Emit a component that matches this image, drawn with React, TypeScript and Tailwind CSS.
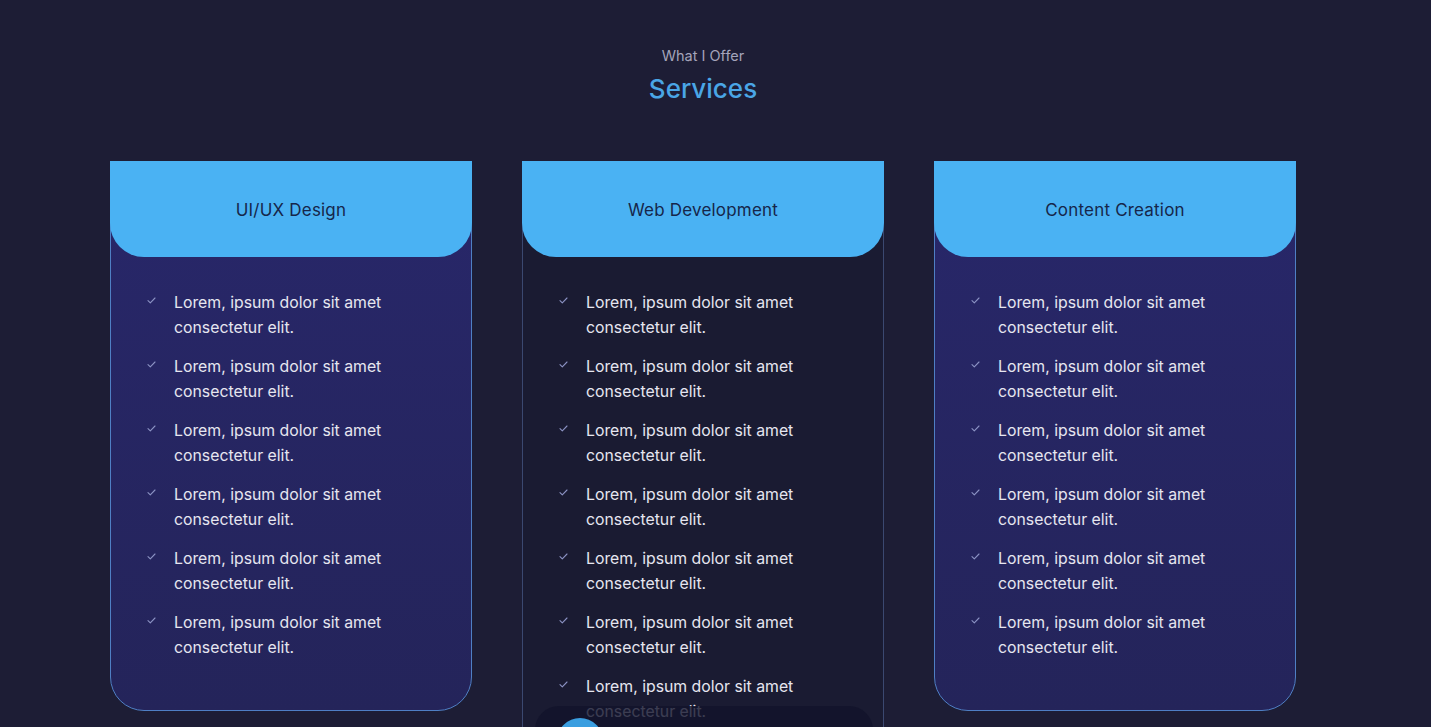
import React from "react";

const items = (n: number) => Array.from({ length: n }, (_, i) => i);

function Check() {
  return (
    <svg width="9" height="7" viewBox="0 0 9 7" className="mt-[7px] shrink-0" fill="none">
      <path d="M1 3.6 L3.3 5.8 L8 1" stroke="#8c93c4" strokeWidth="1.1" strokeLinecap="round" strokeLinejoin="round" />
    </svg>
  );
}

function Card({ title, count, dark }: { title: string; count: number; dark?: boolean }) {
  return (
    <div
      className={
        "w-[362px] shrink-0 rounded-b-[34px] border flex flex-col " +
        (dark
          ? "border-[#3b4870] bg-[#1a1b32] h-[640px]"
          : "border-[#4f7fc4] bg-gradient-to-b from-[#28276a] to-[#24245a] h-[550px]")
      }
    >
      <div className="h-[96px] bg-[#4ab2f3] rounded-b-[34px] flex items-center justify-center -mx-px -mt-px pt-[3px]">
        <span className="text-[17px] text-[#16264a] tracking-[0.2px]">{title}</span>
      </div>
      <ul className="flex flex-col gap-[14px] pt-[33px] pl-[36px]">
        {items(count).map((i) => (
          <li key={i} className="flex gap-[18px]">
            <Check />
            <span className="text-[15.8px] leading-[25px] text-[#e6e6f0] w-[232px]">
              Lorem, ipsum dolor sit amet consectetur elit.
            </span>
          </li>
        ))}
      </ul>
    </div>
  );
}

export default function App() {
  return (
    <div
      className="w-full h-[727px] overflow-hidden bg-[#1d1d35] relative pr-[25px]"
      style={{ fontFamily: '"Inter", "Noto Sans", sans-serif' }}
    >
      <div className="flex flex-col items-center pt-[45px]">
        <div className="text-[14.5px] text-[#a4a4ba] leading-[22px]">What I Offer</div>
        <div className="text-[26px] text-[#4aa6e6] leading-[36px] mt-[4px] font-medium">Services</div>
      </div>
      <div className="flex justify-center gap-[50px] mt-[54px]">
        <Card title="UI/UX Design" count={6} />
        <Card title="Web Development" count={7} dark />
        <Card title="Content Creation" count={6} />
      </div>
      <div className="absolute left-[535px] top-[706px] w-[338px] h-[60px] rounded-[24px] bg-[#12132a]/80">
        <div className="absolute left-[22px] top-[12px] w-[46px] h-[46px] rounded-full bg-[#3a9ee0]" />
      </div>
    </div>
  );
}
